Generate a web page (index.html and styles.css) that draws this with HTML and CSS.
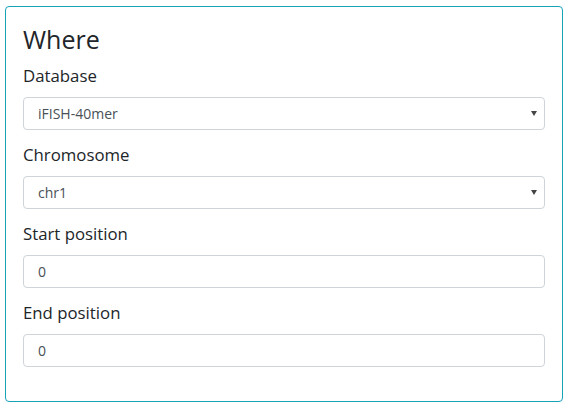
FILE: index.html
```html
<!DOCTYPE html>
<html>
<head>
<meta charset="utf-8">
<link rel="stylesheet" href="styles.css">
</head>
<body>
<div class="card">
  <h4 class="title">Where</h4>
  <div class="group">
    <label class="label">Database</label>
    <div class="control select">
      <span>iFISH-40mer</span>
      <svg class="caret" width="6" height="5" viewBox="0 0 6 5"><path d="M0 0H6L3 5Z" fill="#444"/></svg>
    </div>
  </div>
  <div class="group">
    <label class="label">Chromosome</label>
    <div class="control select">
      <span>chr1</span>
      <svg class="caret" width="6" height="5" viewBox="0 0 6 5"><path d="M0 0H6L3 5Z" fill="#444"/></svg>
    </div>
  </div>
  <div class="group">
    <label class="label">Start position</label>
    <div class="control"><span>0</span></div>
  </div>
  <div class="group">
    <label class="label">End position</label>
    <div class="control"><span>0</span></div>
  </div>
</div>
</body>
</html>
```
FILE: styles.css
```css
html, body {
  margin: 0;
  padding: 0;
  background: #fff;
}
body {
  font-family: "Open Sans", "Liberation Sans", sans-serif;
  color: #212529;
}
.card {
  margin: 6px 7px 0 5px;
  border: 1px solid #17a2b8;
  border-radius: 4px;
  padding: 17px 17px 18px 17px;
  height: 359px;
  box-sizing: content-box;
}
.title {
  margin: 0 0 10px 0;
  font-size: 25px;
  font-weight: 400;
  line-height: 30px;
}
.group {
  display: flex;
  flex-direction: column;
  margin-bottom: 13px;
}
.label {
  font-size: 16.8px;
  line-height: 24px;
  margin-bottom: 9px;
}
.control {
  height: 33px;
  box-sizing: border-box;
  border: 1px solid #ced4da;
  border-radius: 4px;
  display: flex;
  align-items: center;
  padding: 0 7px 0 14px;
  font-size: 14px;
  color: #495057;
}
.control span {
  flex: 1;
}
.caret {
  display: block;
}
```
